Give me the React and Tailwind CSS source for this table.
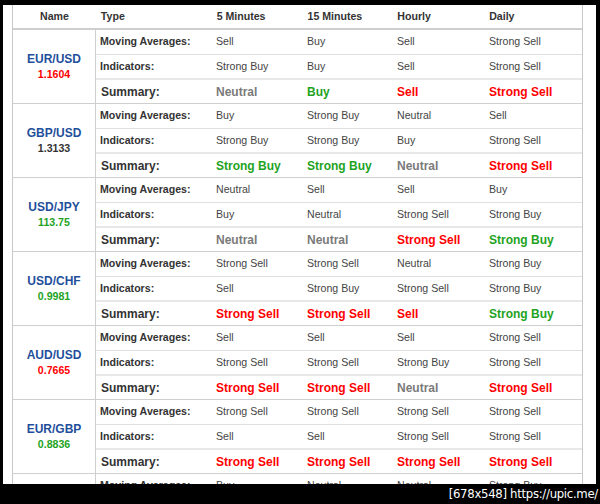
import React from "react";

const RED = "text-[#ff0000]";
const GREEN = "text-[#1ea31e]";
const GRAY = "text-[#7a7a7a]";

const pairs = [
  {
    name: "EUR/USD",
    price: "1.1604",
    priceColor: RED,
    ma: ["Sell", "Buy", "Sell", "Strong Sell"],
    ind: ["Strong Buy", "Buy", "Sell", "Strong Sell"],
    sum: ["Neutral", "Buy", "Sell", "Strong Sell"],
  },
  {
    name: "GBP/USD",
    price: "1.3133",
    priceColor: "text-[#333333]",
    ma: ["Buy", "Strong Buy", "Neutral", "Sell"],
    ind: ["Strong Buy", "Strong Buy", "Buy", "Strong Sell"],
    sum: ["Strong Buy", "Strong Buy", "Neutral", "Strong Sell"],
  },
  {
    name: "USD/JPY",
    price: "113.75",
    priceColor: GREEN,
    ma: ["Neutral", "Sell", "Sell", "Buy"],
    ind: ["Buy", "Neutral", "Strong Sell", "Strong Buy"],
    sum: ["Neutral", "Neutral", "Strong Sell", "Strong Buy"],
  },
  {
    name: "USD/CHF",
    price: "0.9981",
    priceColor: GREEN,
    ma: ["Strong Sell", "Strong Sell", "Neutral", "Strong Buy"],
    ind: ["Sell", "Strong Buy", "Strong Sell", "Strong Buy"],
    sum: ["Strong Sell", "Strong Sell", "Sell", "Strong Buy"],
  },
  {
    name: "AUD/USD",
    price: "0.7665",
    priceColor: RED,
    ma: ["Sell", "Sell", "Sell", "Strong Sell"],
    ind: ["Strong Sell", "Strong Sell", "Strong Buy", "Strong Sell"],
    sum: ["Strong Sell", "Strong Sell", "Neutral", "Strong Sell"],
  },
  {
    name: "EUR/GBP",
    price: "0.8836",
    priceColor: GREEN,
    ma: ["Strong Sell", "Strong Sell", "Strong Sell", "Strong Sell"],
    ind: ["Sell", "Sell", "Strong Sell", "Strong Sell"],
    sum: ["Strong Sell", "Strong Sell", "Strong Sell", "Strong Sell"],
  },
  {
    name: "NZD/USD",
    price: "0.6612",
    priceColor: GREEN,
    ma: ["Buy", "Neutral", "Neutral", "Strong Buy"],
    ind: ["Buy", "Buy", "Neutral", "Strong Buy"],
    sum: ["Buy", "Buy", "Neutral", "Strong Buy"],
  },
];

const colW = ["w-[91px]", "w-[90px]", "w-[92px]", "w-[97px]"];

const sumColor = (v) =>
  v.includes("Sell") ? RED : v.includes("Buy") ? GREEN : GRAY;

const Row = ({ label, values, summary, className }) => (
  <div className={`flex items-center ${className}`}>
    <div
      className={`w-[116px] pl-[4px] font-bold text-[#333] ${
        summary ? "text-[12px] pl-[5px]" : "text-[10.6px]"
      }`}
    >
      {label}
    </div>
    {values.map((v, i) => (
      <div
        key={i}
        className={`${colW[i]} pl-[4px] ${
          summary
            ? `text-[12px] font-bold ${sumColor(v)}`
            : "text-[10.6px] text-[#444]"
        }`}
      >
        {v}
      </div>
    ))}
  </div>
);

const App = () => {
  return (
    <div
      className="w-[600px] h-[504px] bg-black overflow-hidden flex flex-col"
      style={{ fontFamily: '"Liberation Sans", Arial, sans-serif' }}
    >
      <div className="mt-[5px] ml-[3px] mr-[4px] h-[479px] shrink-0 bg-white overflow-hidden pl-[9px]">
        <div className="w-[571px] border-l border-r border-[#c8c8c8]">
          {/* header */}
          <div className="flex items-center h-[25px] border-b-2 border-[#cfcfcf] font-bold text-[10.6px] text-[#333]">
            <div className="w-[83px] text-center">Name</div>
            <div className="w-[117px] pl-[5px]">Type</div>
            <div className="w-[91px] pl-[4px]">5 Minutes</div>
            <div className="w-[90px] pl-[4px]">15 Minutes</div>
            <div className="w-[92px] pl-[4px]">Hourly</div>
            <div className="w-[97px] pl-[4px]">Daily</div>
          </div>
          {pairs.map((p) => (
            <div key={p.name} className="flex border-b border-[#cfcfcf]">
              <div className="w-[83px] border-r border-[#cfcfcf] flex flex-col items-center justify-center">
                <div className="text-[12px] font-bold text-[#1f4f9c] leading-[15px]">
                  {p.name}
                </div>
                <div className={`text-[10.6px] font-bold leading-[14px] ${p.priceColor}`}>
                  {p.price}
                </div>
              </div>
              <div className="flex flex-col">
                <Row
                  label="Moving Averages:"
                  values={p.ma}
                  className="h-[25px] border-b border-[#e0e0e0]"
                />
                <Row
                  label="Indicators:"
                  values={p.ind}
                  className="h-[25px] border-b-2 border-[#e8e8e8]"
                />
                <Row label="Summary:" values={p.sum} summary className="h-[23px]" />
              </div>
            </div>
          ))}
        </div>
      </div>
      <div className="h-[20px] flex items-center justify-end pr-[2px]">
        <span
          className="text-white text-[13px] tracking-[-0.3px]"
          style={{ fontFamily: '"DejaVu Sans Condensed", "DejaVu Sans", sans-serif' }}
        >
          [678x548] https://upic.me/
        </span>
      </div>
    </div>
  );
};

export default App;
